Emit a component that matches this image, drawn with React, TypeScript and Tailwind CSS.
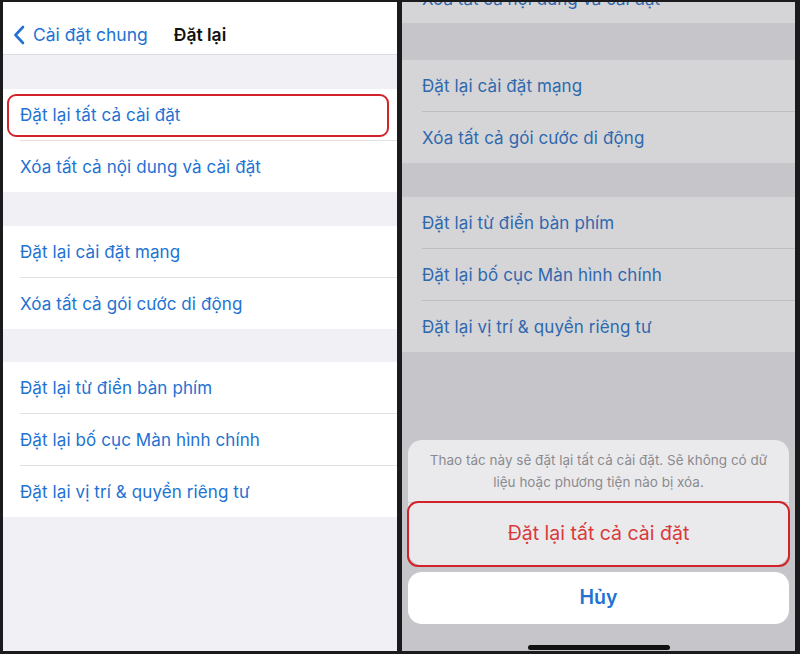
import React from "react";

const font = { fontFamily: "Inter, 'Noto Sans', 'Liberation Sans', sans-serif" };

function Row({ label, last, dim }: { label: string; last?: boolean; dim?: boolean }) {
  return (
    <div className={`flex flex-col ${dim ? "bg-[#d5d5d8] pl-[20px]" : "bg-white pl-[17px]"} ${last ? "h-[51px]" : "h-[52px]"}`}>
      <div
        className={`flex-1 flex items-center pt-[2px] text-[17px] tracking-[0.1px] ${dim ? "text-[#2f68ad]" : "text-[#2272d2]"} ${
          last ? "" : dim ? "border-b border-[#bdbdc2]" : "border-b border-[#e2e2e6]"
        }`}
      >
        {label}
      </div>
    </div>
  );
}

function LeftPanel() {
  return (
    <div className="w-[394px] h-[649px] bg-[#f0f0f5] flex flex-col">
      <div className="h-[53px] pt-[14px] bg-white border-b border-[#dcdce0] grid grid-cols-[1fr_auto_1fr] items-center">
        <div className="flex items-center pl-[10px] gap-[8px] text-[#2272d2] text-[17.5px]">
          <svg width="12" height="20" viewBox="0 0 12 20" fill="none">
            <path d="M10 2 L2.5 10 L10 18" stroke="#2272d2" strokeWidth="2.6" strokeLinecap="round" strokeLinejoin="round" />
          </svg>
          <span>Cài đặt chung</span>
        </div>
        <div className="text-[17.5px] font-semibold text-[#111]">Đặt lại</div>
        <div />
      </div>
      <div className="h-[34px]" />
      <div className="relative">
        <Row label="Đặt lại tất cả cài đặt" />
        <Row label="Xóa tất cả nội dung và cài đặt" last />
        <div className="absolute left-[4px] right-[8px] top-[5px] h-[43px] border-[2.5px] border-[#d2232a] rounded-[9px]" />
      </div>
      <div className="h-[34px]" />
      <div>
        <Row label="Đặt lại cài đặt mạng" />
        <Row label="Xóa tất cả gói cước di động" last />
      </div>
      <div className="h-[33px]" />
      <div>
        <Row label="Đặt lại từ điển bàn phím" />
        <Row label="Đặt lại bố cục Màn hình chính" />
        <Row label="Đặt lại vị trí & quyền riêng tư" last />
      </div>
      <div className="flex-1" />
    </div>
  );
}

function RightPanel() {
  return (
    <div className="w-[393px] h-[649px] bg-[#c5c5ca] flex flex-col">
      <div className="h-[21px] overflow-hidden bg-[#d5d5d8]">
        <div className="h-[51px] -mt-[28px] pl-[20px] flex items-center text-[17px] text-[#2f68ad]">
          Xóa tất cả nội dung và cài đặt
        </div>
      </div>
      <div className="h-[37px]" />
      <div>
        <Row label="Đặt lại cài đặt mạng" dim />
        <Row label="Xóa tất cả gói cước di động" dim last />
      </div>
      <div className="h-[34px]" />
      <div>
        <Row label="Đặt lại từ điển bàn phím" dim />
        <Row label="Đặt lại bố cục Màn hình chính" dim />
        <Row label="Đặt lại vị trí & quyền riêng tư" dim last />
      </div>
      <div className="flex-1" />
      <div className="px-[6px] flex flex-col">
        <div className="relative rounded-[14px] bg-[#eaeaed] flex flex-col">
          <div className="h-[62px] flex items-center justify-center px-[12px] text-center text-[13.5px] leading-[22px] text-[#8a8a8f]">
            Thao tác này sẽ đặt lại tất cả cài đặt. Sẽ không có dữ liệu hoặc phương tiện nào bị xóa.
          </div>
          <div className="h-[63px] border-t border-[#d0d0d4] flex items-center justify-center text-[19.5px] text-[#d83a3a]">
            Đặt lại tất cả cài đặt
          </div>
          <div className="absolute -left-[1px] -right-[1px] top-[61px] h-[66px] border-[2.5px] border-[#d2232a] rounded-[11px]" />
        </div>
        <div className="mt-[7px] h-[52px] rounded-[14px] bg-white flex items-center justify-center text-[19.5px] font-semibold text-[#2272d2]">
          Hủy
        </div>
      </div>
      <div className="h-[27px] flex items-end justify-center pb-[1px]">
        <div className="w-[142px] h-[5px] rounded-full bg-[#111]" />
      </div>
    </div>
  );
}

export default function App() {
  return (
    <div style={font} className="w-[800px] h-[654px] bg-[#1b1b1d] flex pt-[2px] pl-[3px] gap-[5px] overflow-hidden">
      <LeftPanel />
      <RightPanel />
    </div>
  );
}
